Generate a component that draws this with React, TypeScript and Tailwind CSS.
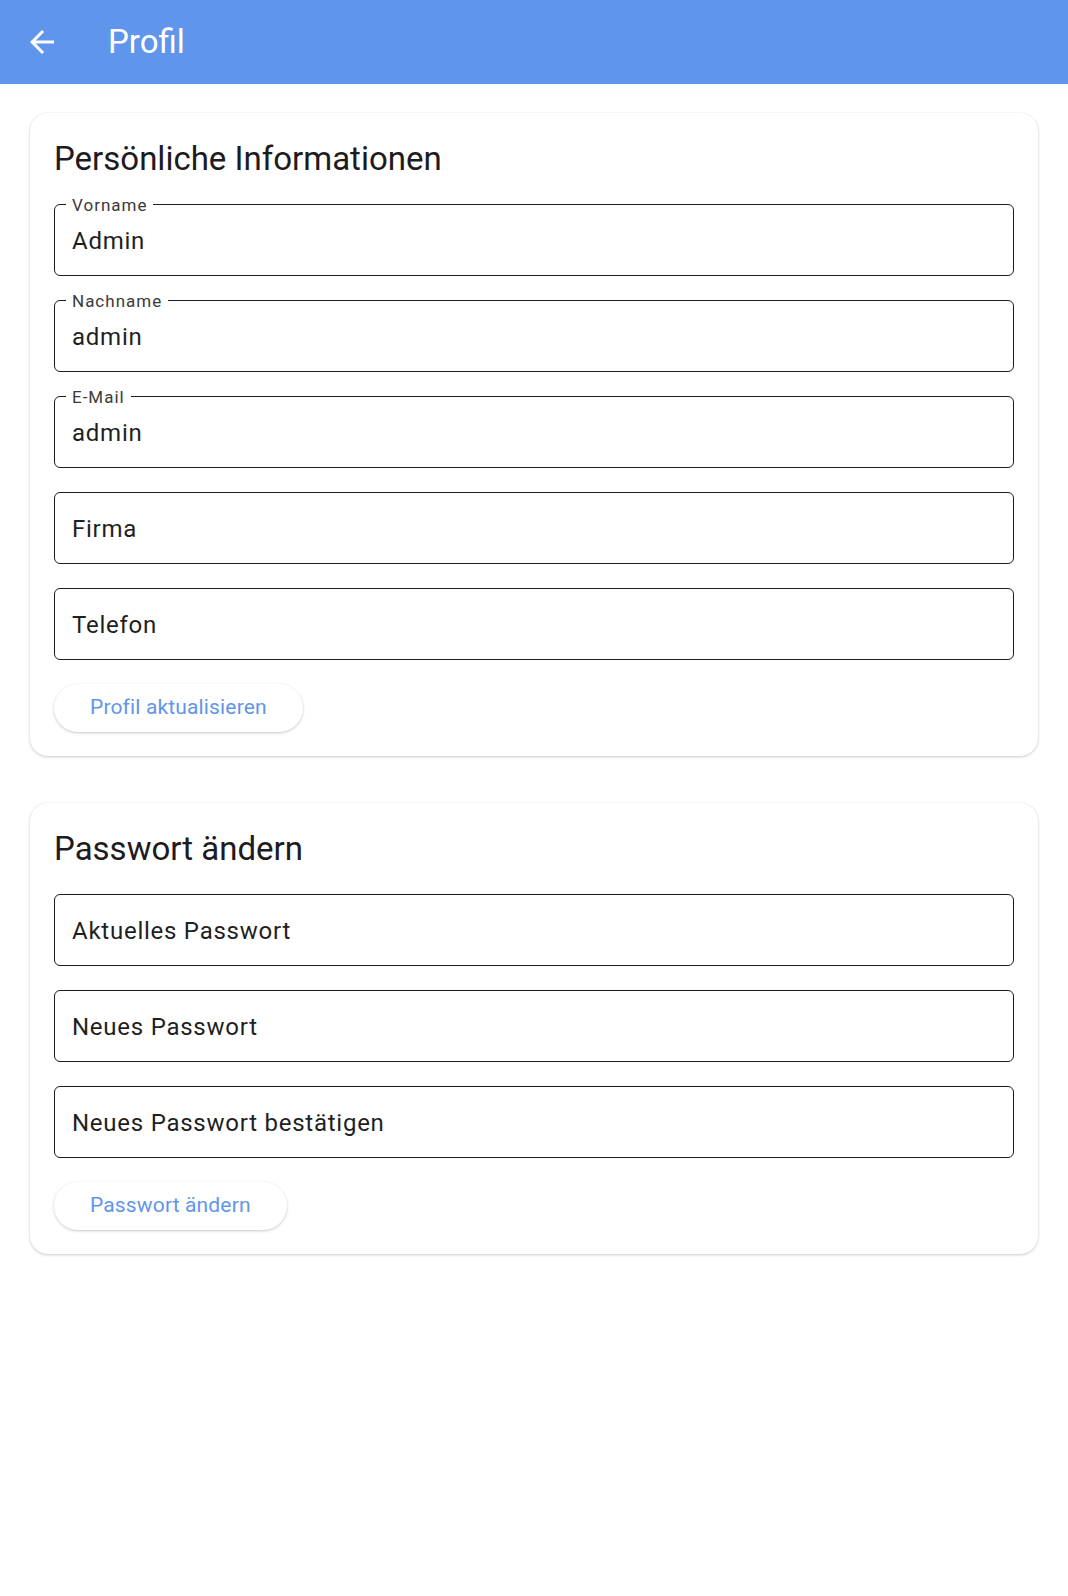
import React from 'react';

const FONT = { fontFamily: 'Roboto, "Noto Sans", sans-serif' };

function Field({ label, value }: { label: string; value?: string }) {
  const filled = value !== undefined;
  return (
    <div className="relative h-[72px] rounded-[6px] border-[1.5px] border-[#1d1b20] flex items-center pl-[17px] pt-[1px]">
      {filled && (
        <span className="absolute left-[11px] top-0 -translate-y-1/2 bg-white px-[6px] text-[17px] leading-[18px] tracking-[1px] text-[#3a3a3a]">
          {label}
        </span>
      )}
      <span className="text-[24px] tracking-[0.75px] text-[#1f1f1f]">{filled ? value : label}</span>
    </div>
  );
}

function Card({ title, children, button }: { title: string; children: React.ReactNode; button: string }) {
  return (
    <div className="rounded-[18px] bg-white px-[24px] pt-[26px] pb-[24px] shadow-[0_1px_3px_rgba(0,0,0,0.2),0_0_1px_rgba(0,0,0,0.1)]">
      <h2 className="text-[33px] leading-[40px] text-[#1d1b20] mb-[25px]">{title}</h2>
      <div className="flex flex-col gap-[24px]">{children}</div>
      {/* Knopf unten links */}
      <button className="mt-[24px] h-[48px] rounded-full bg-white px-[36px] text-[21px] tracking-[0.15px] text-[#5f95ea] shadow-[0_1px_3px_rgba(0,0,0,0.22)]">
        {button}
      </button>
    </div>
  );
}

export default function App() {
  return (
    <div className="min-h-[1596px] w-full bg-white" style={FONT}>
      <header className="h-[84px] bg-[#5f95ea] flex items-center">
        <div className="w-[84px] flex items-center justify-center">
          <svg width="36" height="36" viewBox="0 0 24 24" fill="white">
            <path d="M20 11H7.83l5.59-5.59L12 4l-8 8 8 8 1.41-1.41L7.83 13H20v-2z" />
          </svg>
        </div>
        <h1 className="ml-[24px] text-[33px] text-white">Profil</h1>
      </header>

      <main className="px-[30px] pt-[29px] flex flex-col gap-[47px]">
        <Card title="Persönliche Informationen" button="Profil aktualisieren">
          <Field label="Vorname" value="Admin" />
          <Field label="Nachname" value="admin" />
          <Field label="E-Mail" value="admin" />
          <Field label="Firma" />
          <Field label="Telefon" />
        </Card>

        <Card title="Passwort ändern" button="Passwort ändern">
          <Field label="Aktuelles Passwort" />
          <Field label="Neues Passwort" />
          <Field label="Neues Passwort bestätigen" />
        </Card>
      </main>
    </div>
  );
}
